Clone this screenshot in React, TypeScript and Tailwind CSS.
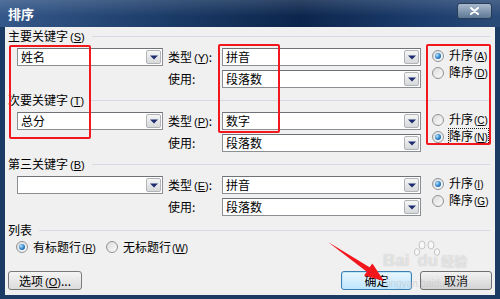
import clsx from "clsx";

type KeyLabelProps = { text: string; k: string; tight?: boolean };

function Mn({ k, tight }: { k: string; tight?: boolean }) {
  return (
    <span
      className={clsx(
        "font-['Liberation_Sans',sans-serif]",
        tight ? "ml-[1px] text-[10px]" : "ml-[2px] text-[11px]"
      )}
    >
      (<span className="underline underline-offset-1">{k}</span>)
    </span>
  );
}

function KeyLabel({ text, k, tight }: KeyLabelProps) {
  return (
    <span className="whitespace-nowrap">
      {text}
      <Mn k={k} tight={tight} />
    </span>
  );
}

function Header({ text, k }: { text: string; k?: string }) {
  return (
    <div className="flex items-center h-[14px] pl-[3px]">
      <span className="leading-[14px]">{k ? <KeyLabel text={text} k={k} /> : text}</span>
      <div className="flex-1 h-px bg-[#d5dbe1] ml-[7px] mr-[5px]" />
    </div>
  );
}

function Combo({ value, className }: { value?: string; className: string }) {
  return (
    <div
      className={clsx(
        "h-[18px] flex items-center bg-white border border-[#8b8e93] border-t-[#6f7277]",
        className
      )}
    >
      <span className="flex-1 pl-[3px] leading-[16px] whitespace-nowrap overflow-hidden">{value}</span>
      <div className="w-[15px] h-[14px] mr-[1px] flex items-center justify-center border border-[#b1b3b6] rounded-[2px] bg-gradient-to-b from-[#f6f6f6] to-[#d6d8db]">
        <svg width="8" height="5" viewBox="0 0 8 5">
          <path d="M0 0.5h8L4 4.5z" fill="#1d2c6e" />
        </svg>
      </div>
    </div>
  );
}

function Radio({ checked, text, k, focus }: { checked?: boolean; text: string; k: string; focus?: boolean }) {
  return (
    <div className="flex items-center h-[17px]">
      <span className="w-[12px] h-[12px] shrink-0 rounded-full border border-[#8f9296] bg-gradient-to-br from-[#dcdcdc] to-[#fbfbfb] flex items-center justify-center">
        {checked && (
          <span className="w-[6px] h-[6px] rounded-full bg-[radial-gradient(circle_at_35%_35%,#b6e4ff,#2a7fc6_55%,#0f4f8c)]" />
        )}
      </span>
      <span
        className={clsx(
          "ml-[5px] leading-[13px]",
          focus && "outline outline-1 outline-dotted outline-[#222]"
        )}
      >
        <KeyLabel text={text} k={k} tight />
      </span>
    </div>
  );
}

type Group = {
  title: string;
  key: string;
  value?: string;
  typeKey: string;
  typeValue: string;
  asc: { k: string; checked?: boolean };
  desc: { k: string; checked?: boolean; focus?: boolean };
};

const groups: Group[] = [
  { title: "主要关键字", key: "S", value: "姓名", typeKey: "Y", typeValue: "拼音", asc: { k: "A", checked: true }, desc: { k: "D" } },
  { title: "次要关键字", key: "T", value: "总分", typeKey: "P", typeValue: "数字", asc: { k: "C" }, desc: { k: "N", checked: true, focus: true } },
  { title: "第三关键字", key: "B", value: "", typeKey: "E", typeValue: "拼音", asc: { k: "I", checked: true }, desc: { k: "G" } },
];

function KeyGroup({ g }: { g: Group }) {
  return (
    <div className="mb-[5px]">
      <Header text={g.title} k={g.key} />
      <div className="flex mt-[5px] pl-[12px]">
        <Combo value={g.value} className="w-[146px]" />
        <div className="ml-[5px] flex flex-col gap-[4px]">
          <div className="flex items-center h-[18px]">
            <span className="w-[54px] whitespace-nowrap">
              类型<Mn k={g.typeKey} />:
            </span>
            <Combo value={g.typeValue} className="w-[199px]" />
          </div>
          <div className="flex items-center h-[18px]">
            <span className="w-[54px]">使用:</span>
            <Combo value="段落数" className="w-[199px]" />
          </div>
        </div>
        <div className="ml-[11px] -mt-[1px] flex flex-col">
          <Radio text="升序" k={g.asc.k} checked={g.asc.checked} />
          <Radio text="降序" k={g.desc.k} checked={g.desc.checked} focus={g.desc.focus} />
        </div>
      </div>
    </div>
  );
}

export default function App() {
  return (
    <div className="relative w-[500px] h-[299px] overflow-hidden bg-[#1b3a64] font-['Noto_Sans_CJK_SC',sans-serif] text-[12px] text-black">
      {/* title bar */}
      <div className="h-[27px] flex items-start justify-between bg-[linear-gradient(180deg,rgba(255,255,255,0.14),rgba(255,255,255,0)_60%),linear-gradient(90deg,#34588a_0%,#1a3a66_35%,#0c254c_60%,#1c3d6d_85%,#2a4a77_100%)]">
        <span className="ml-[8px] mt-[5px] text-white font-bold text-[13px] leading-[17px]">排序</span>
        <div className="mt-[3px] mr-[8px] w-[35px] h-[16px] rounded-[3px] border border-[#2a3d57] bg-gradient-to-b from-[#a9bacd] to-[#5e7896] flex items-center justify-center">
          <svg width="9" height="8" viewBox="0 0 9 8">
            <path d="M1 1l7 6M8 1L1 7" stroke="white" strokeWidth="2" strokeLinecap="round" />
          </svg>
        </div>
      </div>

      {/* dialog body */}
      <div className="mx-[5px] h-[268px] bg-[#f0f0f0] pt-[2px] flex flex-col">
        {groups.map((g) => (
          <KeyGroup key={g.key} g={g} />
        ))}

        <div className="mt-[2px]">
          <Header text="列表" />
        </div>
        <div className="flex items-center h-[16px] mt-[2px] pl-[11px]">
          <div className="w-[90px]">
            <Radio text="有标题行" k="R" checked />
          </div>
          <Radio text="无标题行" k="W" />
        </div>

        <div className="flex items-center mt-[16px] pl-[3px] pr-[3px]">
          <button className="w-[74px] h-[19px] rounded-[3px] border border-[#7a7a7a] bg-gradient-to-b from-[#f4f4f4] to-[#dcdcdc] text-[12px] leading-[17px]">
            选项<Mn k="O" />...
          </button>
          <div className="flex-1" />
          <button className="w-[71px] h-[19px] rounded-[3px] border border-[#3c7fb1] bg-gradient-to-b from-[#eaf6fd] to-[#bee6fd] text-[12px] leading-[17px] shadow-[inset_0_0_0_1px_#bfe6fb]">
            确定
          </button>
          <button className="ml-[8px] w-[72px] h-[19px] rounded-[3px] border border-[#707070] bg-gradient-to-b from-[#f2f2f2] to-[#d4d4d4] text-[12px] leading-[17px]">
            取消
          </button>
        </div>
      </div>

      {/* annotation overlay: red boxes */}
      <div className="absolute left-[9px] top-[45px] w-[82px] h-[94px] border-2 border-[#f2171c] rounded-[2px]" />
      <div className="absolute left-[218px] top-[44px] w-[62px] h-[89px] border-2 border-[#f2171c] rounded-[2px]" />
      <div className="absolute left-[426px] top-[44px] w-[65px] h-[101px] border-2 border-[#f2171c] rounded-[2px]" />

      {/* watermark */}
      <svg className="absolute left-[414px] top-[240px]" width="26" height="28" viewBox="0 0 26 28">
        <g fill="white" fillOpacity="0.55" stroke="#b8b8b8" strokeWidth="0.8">
          <ellipse cx="8" cy="5" rx="3" ry="4" />
          <ellipse cx="17" cy="5" rx="3" ry="4" />
          <ellipse cx="3" cy="12" rx="2.6" ry="3.4" />
          <ellipse cx="23" cy="12" rx="2.6" ry="3.4" />
        </g>
      </svg>
      <div className="absolute left-[383px] top-[252px] text-[17px] font-bold leading-[17px] font-['Liberation_Sans',sans-serif] text-white/60 [text-shadow:0_0_1px_#b4b4b4]">
        Bai<span className="ml-[8px]">du</span>
        <span className="ml-[3px] font-['Noto_Sans_CJK_SC',sans-serif] text-[13px]">经验</span>
      </div>
      <div className="absolute left-[386px] top-[278px] text-[10px] leading-[11px] font-['Liberation_Sans',sans-serif] text-[#c4c4c4]/60">
        jingyan.baidu.com
      </div>

      {/* annotation overlay: arrow */}
      <svg className="absolute left-0 top-0" width="500" height="299" viewBox="0 0 500 299">
        <polygon
          points="328,242 369.6,267.2 372.4,263.6 384,281 364,275.6 366.8,271.8"
          fill="#f2171c"
        />
      </svg>
    </div>
  );
}
